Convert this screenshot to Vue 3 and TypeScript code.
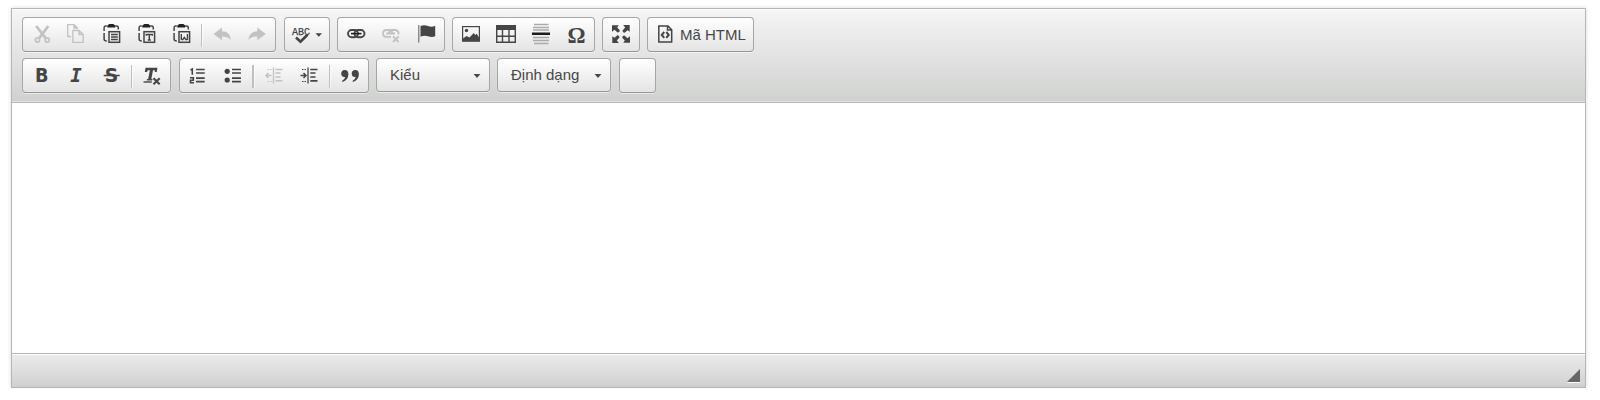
<script setup lang="ts">
interface Tool {
  name: string
  x: number
  w: number
  off?: boolean
  wide?: boolean
  label?: string
}
interface Combo {
  label: string
}

// x is the origin of each icon's drawing space, w its cell width
const topRow: Tool[][] = [
  [
    { name: 'cut', x: 23, w: 35, off: true },
    { name: 'copy', x: 58, w: 35, off: true },
    { name: 'paste', x: 93, w: 35 },
    { name: 'pastetext', x: 128, w: 35 },
    { name: 'pasteword', x: 163, w: 35 },
    { name: 'sep', x: 198, w: 7 },
    { name: 'undo', x: 205, w: 35, off: true },
    { name: 'redo', x: 240, w: 35, off: true },
  ],
  [{ name: 'spell', x: 285, w: 44 }],
  [
    { name: 'link', x: 338, w: 35 },
    { name: 'unlink', x: 373, w: 35, off: true },
    { name: 'anchor', x: 408, w: 36 },
  ],
  [
    { name: 'image', x: 453, w: 35 },
    { name: 'table', x: 488, w: 36 },
    { name: 'rule', x: 524, w: 35 },
    { name: 'omega', x: 559, w: 35 },
  ],
  [{ name: 'maximize', x: 603, w: 36 }],
  [{ name: 'source', x: 648, w: 32, label: 'Mã HTML' }],
]
const bottomRow: Tool[][] = [
  [
    { name: 'bold', x: 23, w: 35 },
    { name: 'italic', x: 58, w: 35 },
    { name: 'strike', x: 93, w: 34 },
    { name: 'sep', x: 127, w: 8 },
    { name: 'clear', x: 135, w: 35 },
  ],
  [
    { name: 'numbers', x: 180, w: 35 },
    { name: 'bullets', x: 215, w: 34 },
    { name: 'sep', x: 249, w: 7, wide: true },
    { name: 'outdent', x: 256, w: 35, off: true },
    { name: 'indent', x: 291, w: 35 },
    { name: 'sep', x: 326, w: 7 },
    { name: 'quote', x: 333, w: 35 },
  ],
]
const combos: Combo[] = [{ label: 'Kiểu' }, { label: 'Định dạng' }]
const rows = [
  { y: 18, groups: topRow, combos: [] as Combo[] },
  { y: 59, groups: bottomRow, combos },
]
const pasteOrigin: Record<string, number> = { paste: 103.3, pastetext: 138.3, pasteword: 173.3 }
</script>

<template>
  <div class="editor">
    <div class="toolbar">
      <div v-for="row in rows" :key="row.y" class="row">
        <div v-for="(group, gi) in row.groups" :key="gi" class="group" :class="{ labelled: group[0].label }">
          <template v-for="t in group" :key="t.x">
            <span v-if="t.name === 'sep'" class="sep" :class="{ wide: t.wide }" :style="{ width: t.w + 'px' }"><i></i></span>
            <svg v-else class="icon" :class="{ off: t.off }" :width="t.w" height="33" :viewBox="`${t.x} ${row.y} ${t.w} 33`">
              <g v-if="t.name === 'cut'" class="line">
                <path d="M36.200 26 45.500 38M48.300 26 39.300 38" stroke-width="2.800" />
                <circle cx="37.500" cy="40" r="2.100" stroke-width="1.700" />
                <circle cx="47.200" cy="40" r="2.100" stroke-width="1.700" />
              </g>
              <g v-else-if="t.name === 'copy'" class="line" stroke-width="1.300">
                <path d="M71 36.500H67.700V24.700H74L77.500 28V29M74 25V28H77.500" />
                <path d="M72.800 30.500H79L83.200 34.500V42.300H72.800ZM79 30.500V34.500H83" />
              </g>
              <g v-else-if="t.name in pasteOrigin" :transform="`translate(${pasteOrigin[t.name]} 0)`">
                <path class="line" stroke-width="1.500" d="M3.500 26H2Q.8 26 .8 28V31M.8 33V39Q.8 41 3.500 41M12 26H13.500Q15 26 15 28V29.500" />
                <path class="dark" d="M4 27.500V25.500L6 24H10L12 25.500V27.500Z" />
                <rect class="line" x="5.700" y="31.700" width="10.600" height="10.600" stroke-width="1.500" />
                <path v-if="t.name === 'paste'" class="line" stroke-width="1.300" d="M7.700 34.500H14.500M7.700 37H14.500M7.700 39.500H14.500" />
                <path v-else-if="t.name === 'pastetext'" class="line" stroke-width="1.500" d="M8 35.800V34.500H14V35.800M11 34.500V40.500M9.500 40H12.500" />
                <path v-else class="line" stroke-width="1.400" d="M8 34V39.300L9.300 39.700 11 37.500 12.700 39.700 14.200 39.300V34" />
              </g>
              <path v-else-if="t.name === 'undo'" class="fill" d="M213.500 34 222 27.500V31.300Q230 31.500 231 40Q228 36.500 222 36.500V40.300Z" />
              <path v-else-if="t.name === 'redo'" class="fill" d="M265.800 34 257.300 27.500V31.300Q249.300 31.500 248.300 40Q251.300 36.500 257.300 36.500V40.300Z" />
              <g v-else-if="t.name === 'spell'">
                <text class="fill abc" x="292" y="35" textLength="18" lengthAdjust="spacingAndGlyphs">ABC</text>
                <path class="line" stroke-width="2.700" d="M296 37.500 300.500 41.700 307.500 34.700" />
                <path class="fill" d="M315.500 33.200H322L318.800 36.800Z" />
              </g>
              <g v-else-if="t.name === 'link'" class="line">
                <rect x="348" y="30" width="10" height="7.200" rx="3.600" stroke-width="1.900" />
                <rect x="354.500" y="30" width="10" height="7.200" rx="3.600" stroke-width="1.900" />
                <path d="M351 33.600H361.500" stroke="#1e1e1e" stroke-width="1.600" />
              </g>
              <g v-else-if="t.name === 'unlink'" class="line">
                <path d="M391 36.800H386.500Q383 36.800 383 33.500T386.500 30H389Q392 30 392.300 33M389 33Q389.300 30 392.500 30H395Q398.500 30 398.700 34.500M386.300 33.500H395" stroke-width="1.800" />
                <path d="M393 36.300 398.700 42M398.700 36.300 393 42" stroke-width="1.900" />
              </g>
              <g v-else-if="t.name === 'anchor'">
                <path class="line" stroke-width="1.100" d="M418.800 25V42.500" opacity=".8" />
                <path class="fill" d="M420.500 26Q424 24.500 428 26T435.200 25.700V36.300Q432 37.500 428 36.300T420.500 36.700Z" />
              </g>
              <g v-else-if="t.name === 'image'">
                <rect class="line" x="462.600" y="26.600" width="16.800" height="14.600" stroke-width="1.200" />
                <circle class="fill" cx="466.500" cy="30.500" r="1.700" />
                <path class="fill" d="M463 41V38.500L466.500 36 469.500 37.500 473.800 33 475.200 35 476.700 33.800 479 37.500V41Z" />
              </g>
              <g v-else-if="t.name === 'table'">
                <path class="fill" d="M496 25H516V30H496Z" />
                <path class="line" stroke-width="1.400" d="M496.700 29V42.300H515.300V29M502.500 29V42.300M509 29V42.300M496.700 36.200H515.300" />
              </g>
              <g v-else-if="t.name === 'rule'">
                <path class="pale" d="M534 24.500H548.500M533 27.500H549M533 30H549M533 37.500H549M533 40.500H549M534 43.500H548.500" />
                <path d="M532 32.500H550V35H532Z" fill="#1e1e1e" />
              </g>
              <text v-else-if="t.name === 'omega'" class="fill omega" x="576.600" y="43" text-anchor="middle" textLength="18" lengthAdjust="spacingAndGlyphs">Ω</text>
              <g v-else-if="t.name === 'maximize'" class="fill">
                <path v-for="a in [0, 90, 180, 270]" :key="a" :transform="`rotate(${a} 621 34)`" d="M612 25.300H618.700L617.200 27.500 619.800 30.300Q619.800 32.500 617.600 32.500L614.500 29.800 612 31.800Z" />
              </g>
              <g v-else-if="t.name === 'source'" class="line">
                <path stroke-width="1.500" d="M658.800 26H668L671.700 29.700V42H658.800ZM667.500 26V30H671.500" />
                <path stroke-width="2" d="M664.200 32 661.800 34.900 664.200 37.800M666.300 32 668.700 34.900 666.300 37.800" />
              </g>
              <text v-else-if="t.name === 'bold'" class="fill letter" x="41.800" y="82" text-anchor="middle" textLength="13.500" lengthAdjust="spacingAndGlyphs">B</text>
              <text v-else-if="t.name === 'italic'" class="fill letter mono" x="76" y="82" text-anchor="middle">I</text>
              <g v-else-if="t.name === 'strike'">
                <text class="fill letter" x="111.500" y="82" text-anchor="middle" textLength="13.500" lengthAdjust="spacingAndGlyphs">S</text>
                <path class="line" stroke-width="1.500" d="M103.700 75.500H119.700" />
              </g>
              <g v-else-if="t.name === 'clear'">
                <path class="fill" d="M145.500 67.700H157.500L156.700 72H154.700L154.900 70.300H153L151.300 79H152.500L152.200 80.400H146.700L147 79H148.200L149.900 70.300H147.800L147 72H144.800Z" />
                <path class="line" stroke-width="1.400" d="M143.500 82H151.800" />
                <path class="line" stroke-width="2.100" d="M153.500 78.300 159.700 84.300M159.700 78.300 153.500 84.300" />
              </g>
              <g v-else-if="t.name === 'numbers'">
                <path class="line" stroke-width="1.600" d="M190.500 70 192.300 69V74.700M190 77.800H193.300V80.200H190.500V82.700H194" />
                <path class="line" stroke-width="1.700" d="M196 69.500H204.700M196 73H204.700M196 78.200H204.700M196 81.700H204.700" />
              </g>
              <g v-else-if="t.name === 'bullets'">
                <circle class="fill" cx="227.200" cy="71.300" r="2.600" />
                <circle class="fill" cx="227.200" cy="80" r="2.600" />
                <path class="line" stroke-width="1.700" d="M232 69.500H240.900M232 73H240.900M232 78.200H240.900M232 81.700H240.900" />
              </g>
              <g v-else-if="t.name === 'outdent'" class="line">
                <path d="M266 75.500H271.500M268.500 73 266 75.500 268.500 78" stroke-width="1.500" />
                <path d="M267.500 69.500H272M267.500 81.500H272" stroke-dasharray="1.500 1" />
                <path d="M273.500 67.500V83.500" stroke-width="1.300" />
                <path d="M275.500 69.500H282.500M275.500 73H280.500M275.500 77H280.500M275.500 80.800H282.500" stroke-width="1.500" />
              </g>
              <g v-else-if="t.name === 'indent'" class="line">
                <path d="M300.500 75.500H306M303.500 73 306 75.500 303.500 78" stroke-width="1.500" />
                <path d="M302 69.500H306.500M302 81.500H306.500" stroke-dasharray="1.500 1" />
                <path d="M308 67.500V83.500" stroke-width="1.300" />
                <path d="M310.300 69.500H317.500M310.300 73H315.500M310.300 77H315.500M310.300 80.800H317.500" stroke-width="1.700" />
              </g>
              <g v-else-if="t.name === 'quote'" class="fill">
                <path v-for="dx in [0, 10.5]" :key="dx" :transform="`translate(${dx} 0)`" d="M344.700 70Q348.400 70 348.400 74.300Q348.300 80 342.500 82L342 80.900Q344.800 79.500 345.200 77Q341.200 77.200 341.200 73.500Q341.300 70 344.700 70Z" />
              </g>
            </svg>
            <span v-if="t.label" class="label">{{ t.label }}</span>
          </template>
        </div>
        <div v-for="c in row.combos" :key="c.label" class="combo">
          <span>{{ c.label }}</span>
          <svg width="8" height="4" viewBox="0 0 8 4"><path d="M.6 0H7.400L4 4Z" fill="#474747" /></svg>
        </div>
        <div v-if="row.combos.length" class="group blank"></div>
      </div>
    </div>
    <div class="content"></div>
    <div class="status">
      <svg width="14" height="14" viewBox="0 0 14 14">
        <path d="M0 14H13V1Z" fill="#fff" />
        <path d="M0 13H13V0Z" fill="#666" />
      </svg>
    </div>
  </div>
</template>

<style>
body {
  background: #fff;
}
</style>

<style scoped>
.editor {
  box-sizing: border-box;
  width: 1575px;
  height: 380px;
  margin: 8px 0 0 11px;
  border: 1px solid #b6b6b6;
  box-shadow: 0 0 4px rgba(0, 0, 0, 0.15);
  display: flex;
  flex-direction: column;
  font-family: "Liberation Sans", Arial, sans-serif;
}
.toolbar {
  box-sizing: border-box;
  height: 94px;
  padding: 8px 10px 0;
  border-bottom: 1px solid #b6b6b6;
  background: linear-gradient(#f5f5f5, #cfd1cf);
  box-shadow: inset 0 1px 0 #fff, inset 0 -1px 0 #e4e5e4;
}
.row {
  display: flex;
  align-items: flex-start;
  height: 41px;
}
.group,
.combo {
  box-sizing: border-box;
  display: flex;
  height: 35px;
  border: 1px solid #a6a6a6;
  border-bottom-color: #979797;
  border-radius: 4px;
  background: linear-gradient(#fff, #e4e4e4);
  box-shadow: 0 1px 0 rgba(255, 255, 255, 0.5), inset 0 0 2px rgba(255, 255, 255, 0.15), inset 0 1px 0 rgba(255, 255, 255, 0.15);
  margin-right: 7px;
}
.group:first-child {
  margin-right: 8px;
}
.combo {
  width: 114px;
  height: 34px;
  padding: 0 8px 0 13px;
  align-items: center;
  justify-content: space-between;
}
.combo span,
.label {
  color: #474747;
  font-size: 15px;
  line-height: 31px;
  white-space: nowrap;
}
.combo span {
  padding-bottom: 1px;
}
.combo svg {
  margin-top: 1px;
}
.labelled {
  width: 107px;
}
.label {
  line-height: 33px;
}
.blank {
  width: 37px;
  margin-left: 1px;
}
.icon {
  display: block;
  flex: none;
  color: #454545;
}
.icon.off {
  color: #c2c2c2;
}
.fill {
  fill: currentColor;
}
.dark {
  fill: #222;
}
.line {
  fill: none;
  stroke: currentColor;
}
.pale {
  stroke: #aaa;
  stroke-width: 1.4;
}
.sep {
  display: flex;
  justify-content: center;
  padding-top: 6px;
  box-sizing: border-box;
}
.sep i {
  width: 1px;
  height: 23px;
  background: #c0c0c0;
  box-shadow: 1px 0 0 rgba(255, 255, 255, 0.6);
}
.sep.wide i {
  width: 2px;
}
.abc {
  font: 11px "Liberation Mono", monospace;
  stroke: currentColor;
  stroke-width: 0.25;
}
.omega {
  font: bold 24px "Liberation Serif", serif;
}
.letter {
  font: bold 19px "DejaVu Sans", sans-serif;
}
.mono {
  font: italic bold 19px "DejaVu Sans Mono", monospace;
}
.content {
  flex: 1;
  background: #fff;
}
.status {
  box-sizing: border-box;
  height: 34px;
  border-top: 1px solid #b6b6b6;
  padding: 15px 4px 0 0;
  display: flex;
  justify-content: flex-end;
  background: linear-gradient(#ebebeb, #cfd1cf);
  box-shadow: inset 0 1px 0 #fff;
}
</style>
